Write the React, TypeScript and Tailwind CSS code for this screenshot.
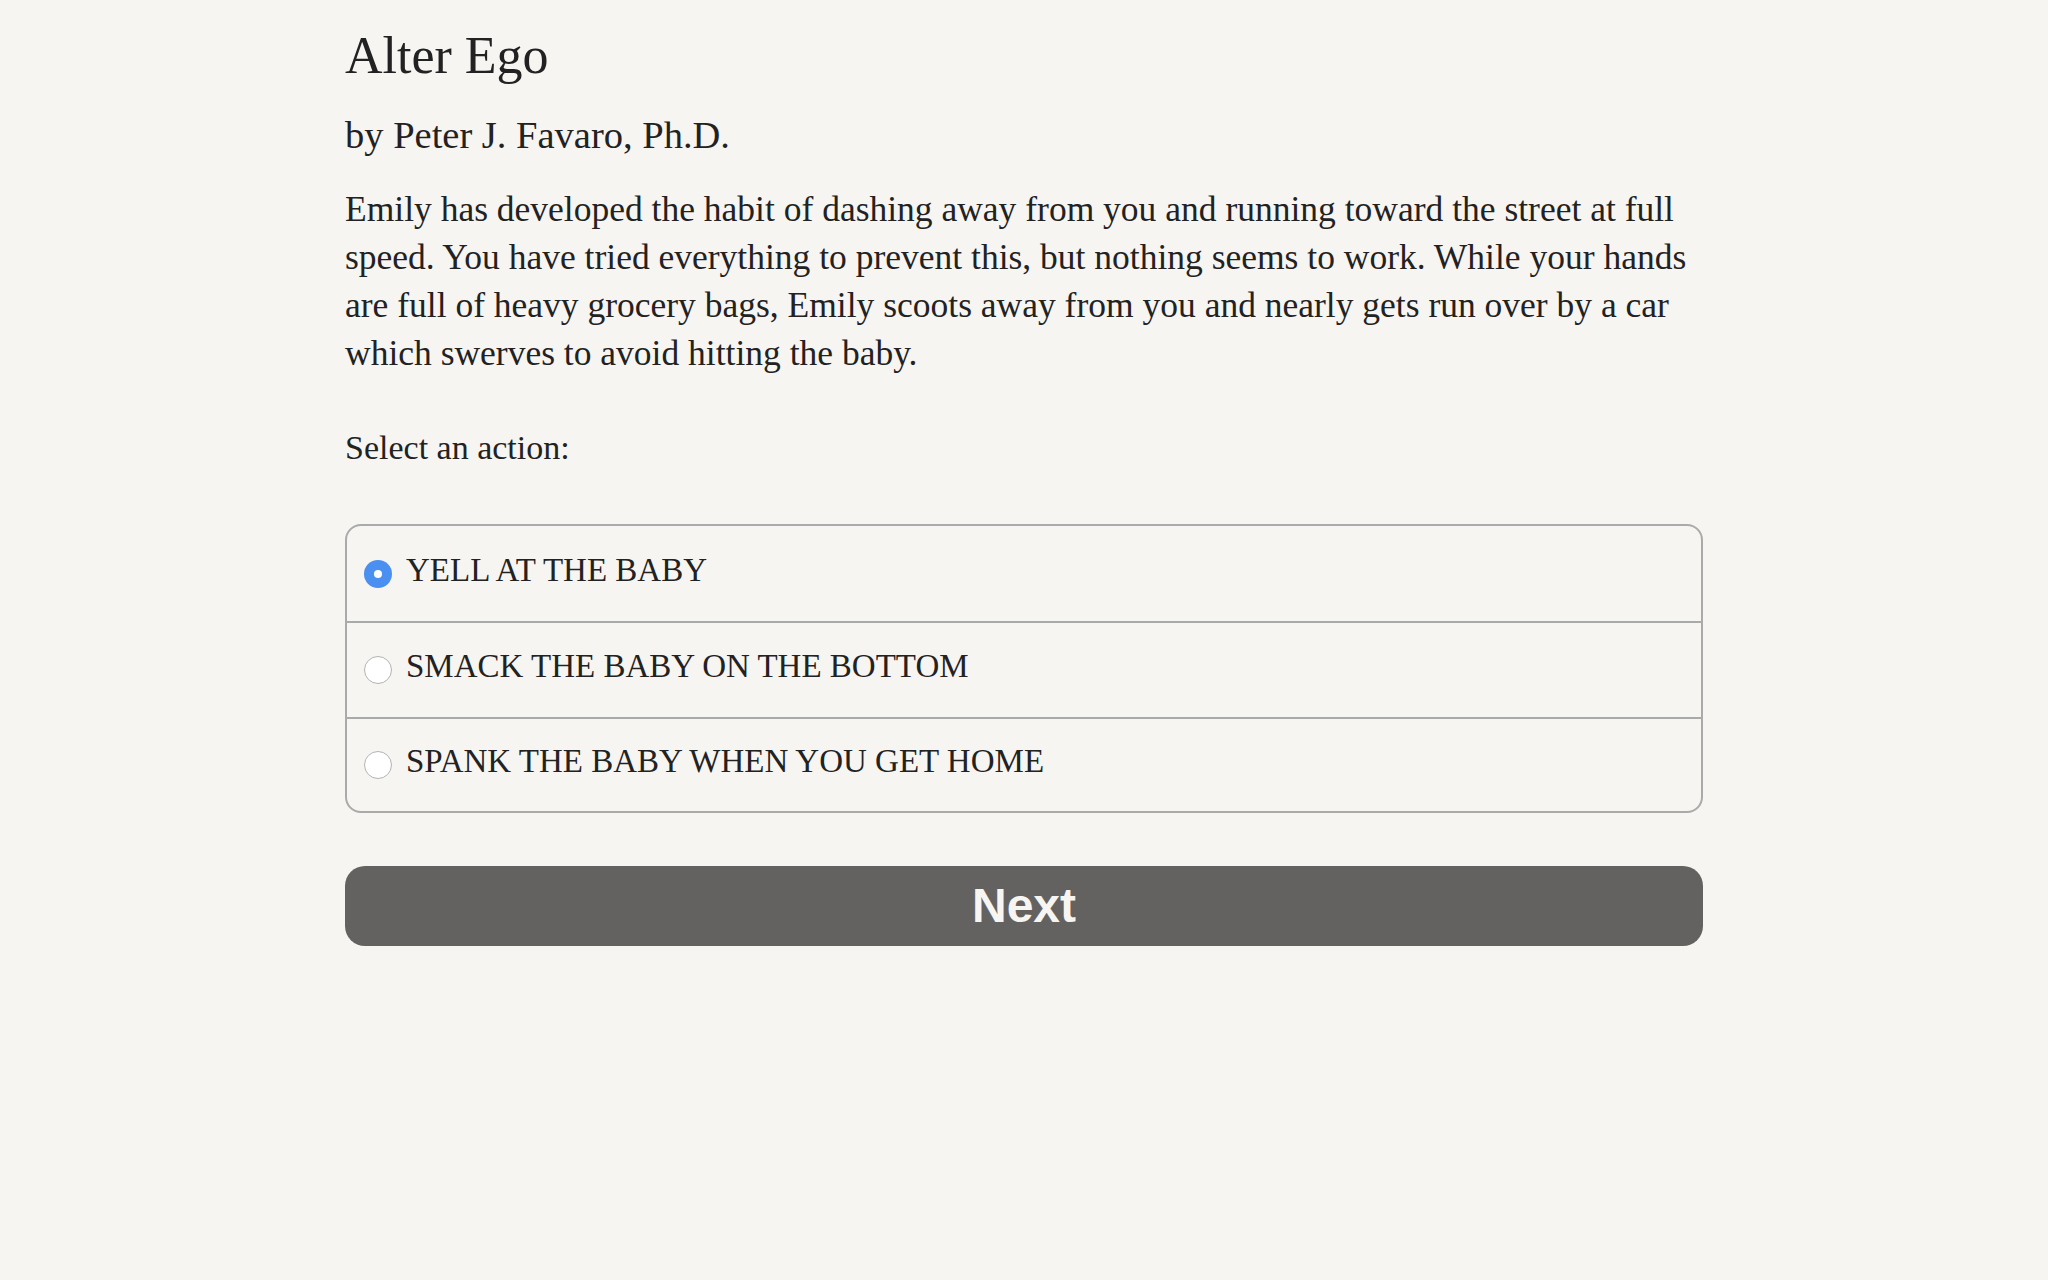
import React, { useState } from "react";

const options = [
  "YELL AT THE BABY",
  "SMACK THE BABY ON THE BOTTOM",
  "SPANK THE BABY WHEN YOU GET HOME",
];

// 行ごとの高さ（下線を含む）
const rowHeights = ["h-[97px] border-b-2", "h-[96px] border-b-2", "h-[92px]"];

const serif = "font-['Liberation_Serif','Times_New_Roman',serif]";

export default function App() {
  const [selected, setSelected] = useState(0);

  return (
    <div className="min-h-[1280px] bg-[#f7f5f2] text-[#222]">
      <div className={`mx-auto w-[1358px] pt-[26px] ${serif}`}>
        <h1 className="text-[52px] leading-[60px]">Alter Ego</h1>
        <h2 className="mt-[25px] text-[38.5px] leading-[48px]">
          by Peter J. Favaro, Ph.D.
        </h2>
        <p className="mt-[26px] text-[35.5px] leading-[48px]">
          Emily has developed the habit of dashing away from you and running
          toward the street at full speed. You have tried everything to prevent
          this, but nothing seems to work. While your hands are full of heavy
          grocery bags, Emily scoots away from you and nearly gets run over by a
          car which swerves to avoid hitting the baby.
        </p>
        <p className="mt-[47px] text-[34px] leading-[48px]">Select an action:</p>

        {/* 選択肢 */}
        <div className="mt-[52px] overflow-hidden rounded-[16px] border-2 border-[#aaaaaa]">
          {options.map((label, i) => (
            <label
              key={label}
              className={`flex cursor-pointer items-center border-[#aaaaaa] pl-[17px] ${rowHeights[i]}`}
              onClick={() => setSelected(i)}
            >
              {selected === i ? (
                <span className="flex h-[28px] w-[28px] shrink-0 items-center justify-center rounded-full bg-[#4b8ff0]">
                  <span className="h-[8px] w-[8px] rounded-full bg-white" />
                </span>
              ) : (
                <span className="h-[28px] w-[28px] shrink-0 rounded-full border-[1.5px] border-[#b3b3b3] bg-white" />
              )}
              <span className="ml-[14px] pb-[8px] text-[33px] leading-[48px]">
                {label}
              </span>
            </label>
          ))}
        </div>

        <button className="mt-[53px] flex h-[80px] w-full items-center justify-center rounded-[20px] bg-[#636260] font-['Liberation_Sans',Arial,sans-serif] text-[48px] font-bold text-[#f7f5f2]">
          Next
        </button>
      </div>
    </div>
  );
}
